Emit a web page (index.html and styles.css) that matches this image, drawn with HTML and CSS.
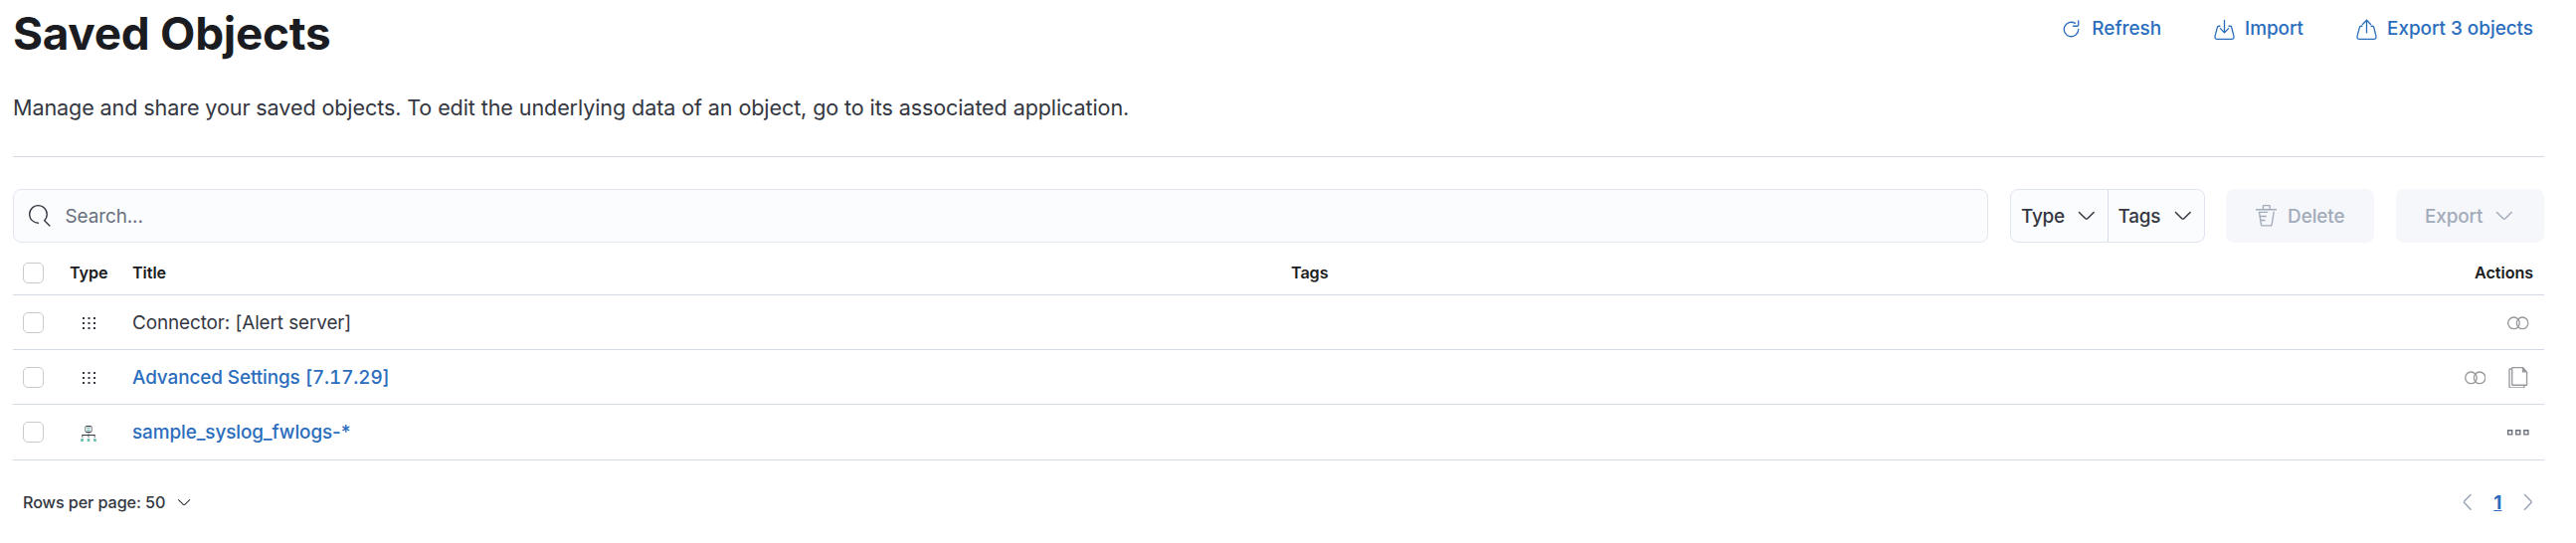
FILE: index.html
```
<!DOCTYPE html>
<html lang="en">
<head>
<meta charset="utf-8">
<title>Saved Objects</title>
<link rel="stylesheet" href="styles.css">
</head>
<body>
<svg class="sprite" aria-hidden="true">
  <symbol id="down" viewBox="0 0 16 16"><path d="M13.069 5.157L8.384 9.768a.546.546 0 01-.768 0L2.93 5.158a.552.552 0 00-.771 0 .53.53 0 000 .759l4.684 4.61c.641.631 1.672.63 2.312 0l4.684-4.61a.53.53 0 000-.76.552.552 0 00-.771 0z"/></symbol>
  <symbol id="rings" viewBox="0 0 16 16"><g fill="none" stroke="currentColor"><circle cx="4.800" cy="8" r="4.300"/><circle cx="11.200" cy="8" r="4.300"/></g></symbol>
  <symbol id="apps" viewBox="0 0 13 13"><path d="M0 0h2v2H0zM5.500 0h2v2h-2zM11 0h2v2h-2zM0 5h2v2H0zM5.500 5h2v2h-2zM11 5h2v2h-2zM0 10h2v2H0zM5.500 10h2v2h-2zM11 10h2v2h-2z"/></symbol>
</svg>
<main class="page">
  <header class="page-head">
    <h1 class="title">Saved Objects</h1>
    <nav class="links">
      <a class="link"><svg class="icon link-icon" viewBox="0 0 16 16"><path d="M11.228 2.942a.5.5 0 11-.538.842A5 5 0 1013 8a.5.5 0 111 0 6 6 0 11-2.772-5.058zM14 1.5v3A1.5 1.5 0 0112.5 6h-3a.5.5 0 010-1h3a.5.5 0 00.5-.5v-3a.5.5 0 111 0z"/></svg>Refresh</a>
      <a class="link"><svg class="icon link-icon" viewBox="0 0 16 16"><path class="line" d="M8 1v9.6M4.900 7.300L8 10.600l3.100-3.300M4.500 5.500h-.8c-.6 0-1 .3-1.100.9L.9 12.800C.5 14.300.9 15.500 2.200 15.500h11.600c1.300 0 1.700-1.200 1.300-2.700L13.500 6.400c-.1-.6-.5-.9-1.100-.9h-.9"/></svg>Import</a>
      <a class="link"><svg class="icon link-icon" viewBox="0 0 16 16"><path class="line" d="M8 1v9.600M4.900 4.200L8 1l3.100 3.200M4.500 5.500h-.8c-.6 0-1 .3-1.100.9L.9 12.800C.5 14.300.9 15.500 2.200 15.500h11.600c1.300 0 1.700-1.200 1.300-2.700L13.500 6.400c-.1-.6-.5-.9-1.100-.9h-.9"/></svg>Export 3 objects</a>
    </nav>
  </header>
  <p class="lead">Manage and share your saved objects. To edit the underlying data of an object, go to its associated application.</p>
  <hr class="rule">
  <section class="toolbar">
    <div class="search"><svg class="icon" viewBox="0 0 16 16"><path d="M11.271 11.978l3.872 3.873a.502.502 0 00.708 0 .502.502 0 000-.708l-3.565-3.564c2.38-2.747 2.267-6.923-.342-9.532-2.730-2.730-7.170-2.730-9.898 0-2.728 2.729-2.728 7.170 0 9.900a6.955 6.955 0 004.949 2.050.5.5 0 000-1 5.960 5.960 0 01-4.242-1.757 6.010 6.010 0 010-8.486 6.004 6.004 0 018.484 0 6.010 6.010 0 010 8.486.5.5 0 000 .738z"/></svg>Search...</div>
    <div class="filters">
      <button class="filter">Type<svg class="icon"><use href="#down"/></svg></button>
      <button class="filter">Tags<svg class="icon"><use href="#down"/></svg></button>
    </div>
    <button class="btn" disabled><svg class="icon" viewBox="0 0 16 16"><path d="M11 3h5v1H0V3h5V1a1 1 0 011-1h4a1 1 0 011 1v2zm-7.056 8H7v1H4.100l.392 2.519c.042.269.254.458.493.458h6.030c.239 0 .451-.189.493-.458l1.498-9.576H14l-1.504 9.730c-.116.747-.740 1.304-1.481 1.304h-6.030c-.741 0-1.365-.557-1.481-1.304l-1.511-9.730H9V5.950H3.157L3.476 8H8v1H3.632l.312 2zM6 3h4V1H6v2z"/></svg>Delete</button>
    <button class="btn" disabled>Export<svg class="icon"><use href="#down"/></svg></button>
  </section>
  <section class="table">
    <div class="row row-head"><i class="check"></i><b>Type</b><b>Title</b><b>Tags</b><b>Actions</b></div>
    <div class="row"><i class="check"></i><span class="center"><svg class="icon apps"><use href="#apps"/></svg></span><span>Connector: [Alert server]</span><span></span>
      <span class="actions"><svg class="icon"><use href="#rings"/></svg></span></div>
    <div class="row"><i class="check"></i><span class="center"><svg class="icon apps"><use href="#apps"/></svg></span><a class="name tabular">Advanced Settings [7.17.29]</a><span></span>
      <span class="actions"><svg class="icon"><use href="#rings"/></svg><svg class="icon" viewBox="0 0 16 16"><path d="M11.400 0c.235 0 .460.099.622.273l2.743 3c.151.162.235.378.235.602v9.250a.867.867 0 01-.857.875H3.857A.867.867 0 013 13.125V.875C3 .392 3.384 0 3.857 0H11.400zM14 4h-2.600a.4.4 0 01-.4-.4V1H4v12h10V4z"/><path d="M3 1H2a1 1 0 00-1 1v13a1 1 0 001 1h10a1 1 0 001-1v-1h-1v1H2V2h1V1z"/></svg></span></div>
    <div class="row row-last"><i class="check"></i><span class="center"><svg class="icon pattern" viewBox="0 0 16 16"><path class="gray" d="M5.500 0h5l1.500 1.500v4L10.500 7H8.500v2H15v3h-1.500v-2H8.700v2H7.300v-2H2.500v2H1V9h6.500V7h-2L4 5.500v-4zM6 1.200l-.8.8v3l.8.8h4l.8-.8V2l-.8-.8z"/><path d="M5.500 0h5v1.100h-5zM5.500 6h5v1.100h-5zM1.500 9h13v1.100h-13z"/><path class="teal" d="M6.200 2h3.600v1H6.200zM6.200 4h3.600v1H6.200zM.5 13h2.700l-.6 3H0zM6.700 13h2.600v3H6.700zM12.800 13h2.700l.5 3h-2.600z"/></svg></span><a class="name">sample_syslog_fwlogs-*</a><span></span>
      <span class="actions dark"><svg class="icon" viewBox="0 0 16 16"><path d="M0 6h4v4H0V6zm1 1v2h2V7H1zm5-1h4v4H6V6zm1 1v2h2V7H7zm5-1h4v4h-4V6zm1 3h2V7h-2v2z"/></svg></span></div>
  </section>
  <footer class="foot">
    <button class="per-page">Rows per page: 50<svg class="icon"><use href="#down"/></svg></button>
    <nav class="pager"><svg class="icon prev"><use href="#down"/></svg><a class="current">1</a><svg class="icon next"><use href="#down"/></svg></nav>
  </footer>
</main>
</body>
</html>
```
FILE: styles.css
```
* { box-sizing: border-box; }
body { margin: 0; background: #fff; color: #343741; font-family: Inter, "Liberation Sans", sans-serif; font-size: 18.9px; letter-spacing: -0.005em; }
button { font: inherit; letter-spacing: inherit; color: inherit; border: 0; background: none; padding: 0; }
.sprite { position: absolute; width: 0; height: 0; }
.icon { width: 21.6px; height: 21.6px; fill: currentColor; flex: none; display: block; }
.line { fill: none; stroke: currentColor; stroke-linecap: round; }
.page { width: 2545px; margin-left: 13px; }
.page-head { display: flex; justify-content: space-between; height: 84px; }
.title { margin: 5px 0 0; font-size: 45.9px; line-height: 58px; font-weight: 700; letter-spacing: -0.006em; color: #1a1c21; }
.links { display: flex; gap: 53px; height: 57px; align-items: center; padding-right: 11px; letter-spacing: -0.001em; }
.link { display: flex; align-items: center; gap: 10px; color: #2b6dbd; font-weight: 500; }
.link-icon { width: 21px; height: 21px; margin-top: 2px; }
.lead { margin: 8px 0 33px; font-size: 21.6px; line-height: 32px; letter-spacing: -0.0055em; }
.rule { border: 0; margin: 0; height: 1px; background: #d3dae6; }
.toolbar { display: flex; margin-top: 32px; height: 54px; }
.search { width: 1986px; border: 1px solid #e3e6ef; border-radius: 8px; background: #fbfcfe; display: flex; align-items: center; gap: 15px; padding-left: 15px; color: #69707d; margin-right: 22px; }
.search .icon { color: #343741; }
.filters { width: 196px; display: flex; border: 1px solid #e0e4ef; border-radius: 8px; background: #fbfcfe; margin-right: 21px; font-weight: 500; letter-spacing: -0.012em; }
.filter { flex: 1; display: flex; align-items: center; justify-content: space-between; padding: 0 10px; }
.filter + .filter { border-left: 1px solid #d8dce8; }
.btn { width: 149px; border-radius: 8px; background: #f6f7fa; color: #a2abba; display: flex; align-items: center; justify-content: center; gap: 11px; margin-right: 22px; font-weight: 500; }
.btn:last-child { margin-right: 0; }
.table { margin-top: 8px; }
.row { display: grid; grid-template-columns: 47px 63px 1165px 1fr auto; align-items: center; height: 55px; border-bottom: 1px solid #d3dae6; padding: 0 11px 0 10px; }
.row-head { height: 45px; font-size: 16.2px; color: #1a1c21; }
.row-last { height: 56px; }
.row b { font-weight: 600; }
.check { width: 21px; height: 21px; border: 1px solid #c9cbcd; border-radius: 5px; }
.center { display: flex; justify-content: center; width: 38px; padding-top: 2px; }
.apps { width: 13px; height: 13px; }
.pattern { width: 16px; height: 16px; }
.name { color: #2b6dbd; font-weight: 500; }
.tabular { font-variant-numeric: tabular-nums; }
.actions { display: flex; gap: 22px; color: #98999d; padding: 1px 4px 0 0; }
.dark { color: #69707d; }
.gray { fill: #98999d; }
.teal { fill: #6dbfb3; }
.foot { display: flex; justify-content: space-between; align-items: center; height: 83px; padding: 1px 5px 0 10px; }
.per-page { display: flex; align-items: center; gap: 11px; font-size: 16.2px; font-weight: 500; }
.per-page .icon { width: 16.2px; height: 16.2px; }
.pager { display: flex; align-items: center; gap: 16px; color: #98a2b3; }
.prev { transform: rotate(90deg); }
.next { transform: rotate(-90deg); }
.current { color: #2b6dbd; font-weight: 700; text-decoration: underline; }
```
